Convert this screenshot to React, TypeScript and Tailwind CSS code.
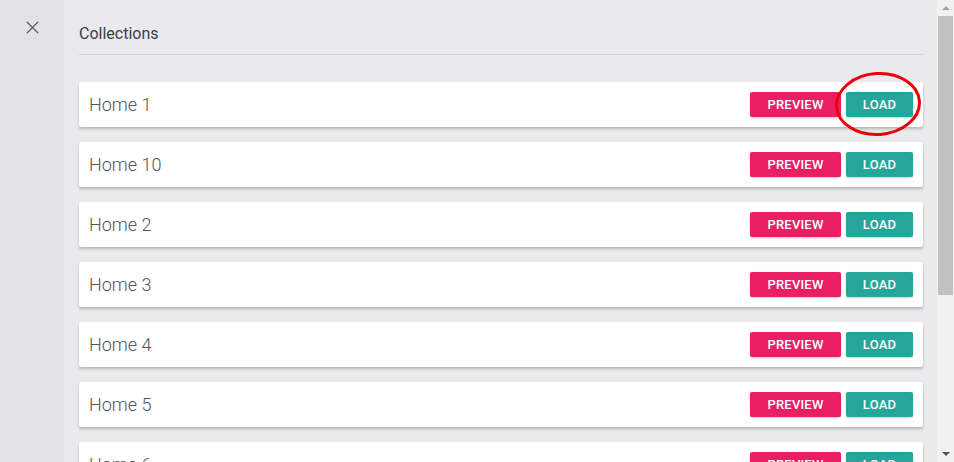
import { X } from "lucide-react";

const ITEMS = ["Home 1", "Home 10", "Home 2", "Home 3", "Home 4", "Home 5", "Home 6"];

// ─── Row ─────────────────────────────────────────────────────────────────────
function CollectionRow({ name, highlight }: { name: string; highlight?: boolean }) {
  return (
    <div className="relative flex items-center justify-between h-[45px] pl-[10px] pr-[10px] bg-white rounded-[2px] shadow-[0_2px_3px_rgba(0,0,0,0.22)] shrink-0">
      <span className="text-[18px] font-light text-[#4f555b]">{name}</span>
      <div className="flex items-center gap-[5px]">
        <button className="h-[25px] w-[91px] rounded-[2px] bg-[#e91e63] text-white text-[13px] leading-[25px] font-medium tracking-[0.2px] shadow-[0_1px_2px_rgba(0,0,0,0.2)]">
          PREVIEW
        </button>
        <button className="h-[25px] w-[67px] rounded-[2px] bg-[#26a69a] text-white text-[13px] leading-[25px] font-medium tracking-[0.2px] shadow-[0_1px_2px_rgba(0,0,0,0.2)]">
          LOAD
        </button>
      </div>
      {highlight && (
        <svg className="absolute right-[0px] top-[-11px] pointer-events-none" width="88" height="66" viewBox="0 0 88 66">
          <ellipse cx="43" cy="33" rx="41.5" ry="30.5" fill="none" stroke="#e8000b" strokeWidth="3" transform="rotate(-4 43 33)" />
        </svg>
      )}
    </div>
  );
}

// ─── Fake scrollbar ──────────────────────────────────────────────────────────
function Scrollbar() {
  return (
    <div className="w-[17px] h-full bg-[#f1f1f1] flex flex-col items-center shrink-0">
      <div className="h-[16px] w-full flex items-center justify-center">
        <div className="w-0 h-0 border-l-[4px] border-r-[4px] border-b-[4px] border-l-transparent border-r-transparent border-b-[#a3a3a3]" />
      </div>
      <div className="w-[15px] h-[279px] bg-[#c1c1c1]" />
      <div className="flex-1" />
      <div className="h-[16px] w-full flex items-center justify-center">
        <div className="w-0 h-0 border-l-[4px] border-r-[4px] border-t-[4px] border-l-transparent border-r-transparent border-t-[#505050]" />
      </div>
    </div>
  );
}

export default function App() {
  return (
    <div className="flex w-[954px] h-[462px] overflow-hidden font-['Roboto','Liberation_Sans',sans-serif]">
      {/* Sidebar */}
      <div className="w-[64px] h-full bg-[#e3e3e5] shrink-0 flex justify-center pt-[17px]">
        <X size={21} strokeWidth={1.4} className="text-[#555a60]" />
      </div>

      {/* Main */}
      <div className="flex-1 h-full bg-[#eaeaec] pl-[15px] pr-[14px] overflow-hidden">
        <div className="pt-[24px] pb-[10px] border-b border-[#d4d4d6]">
          <h1 className="text-[16px] leading-[20px] text-[#37404a]">Collections</h1>
        </div>
        <div className="flex flex-col gap-[15px] pt-[27px]">
          {ITEMS.map((name, i) => (
            <CollectionRow key={name} name={name} highlight={i === 0} />
          ))}
        </div>
      </div>

      <Scrollbar />
    </div>
  );
}
